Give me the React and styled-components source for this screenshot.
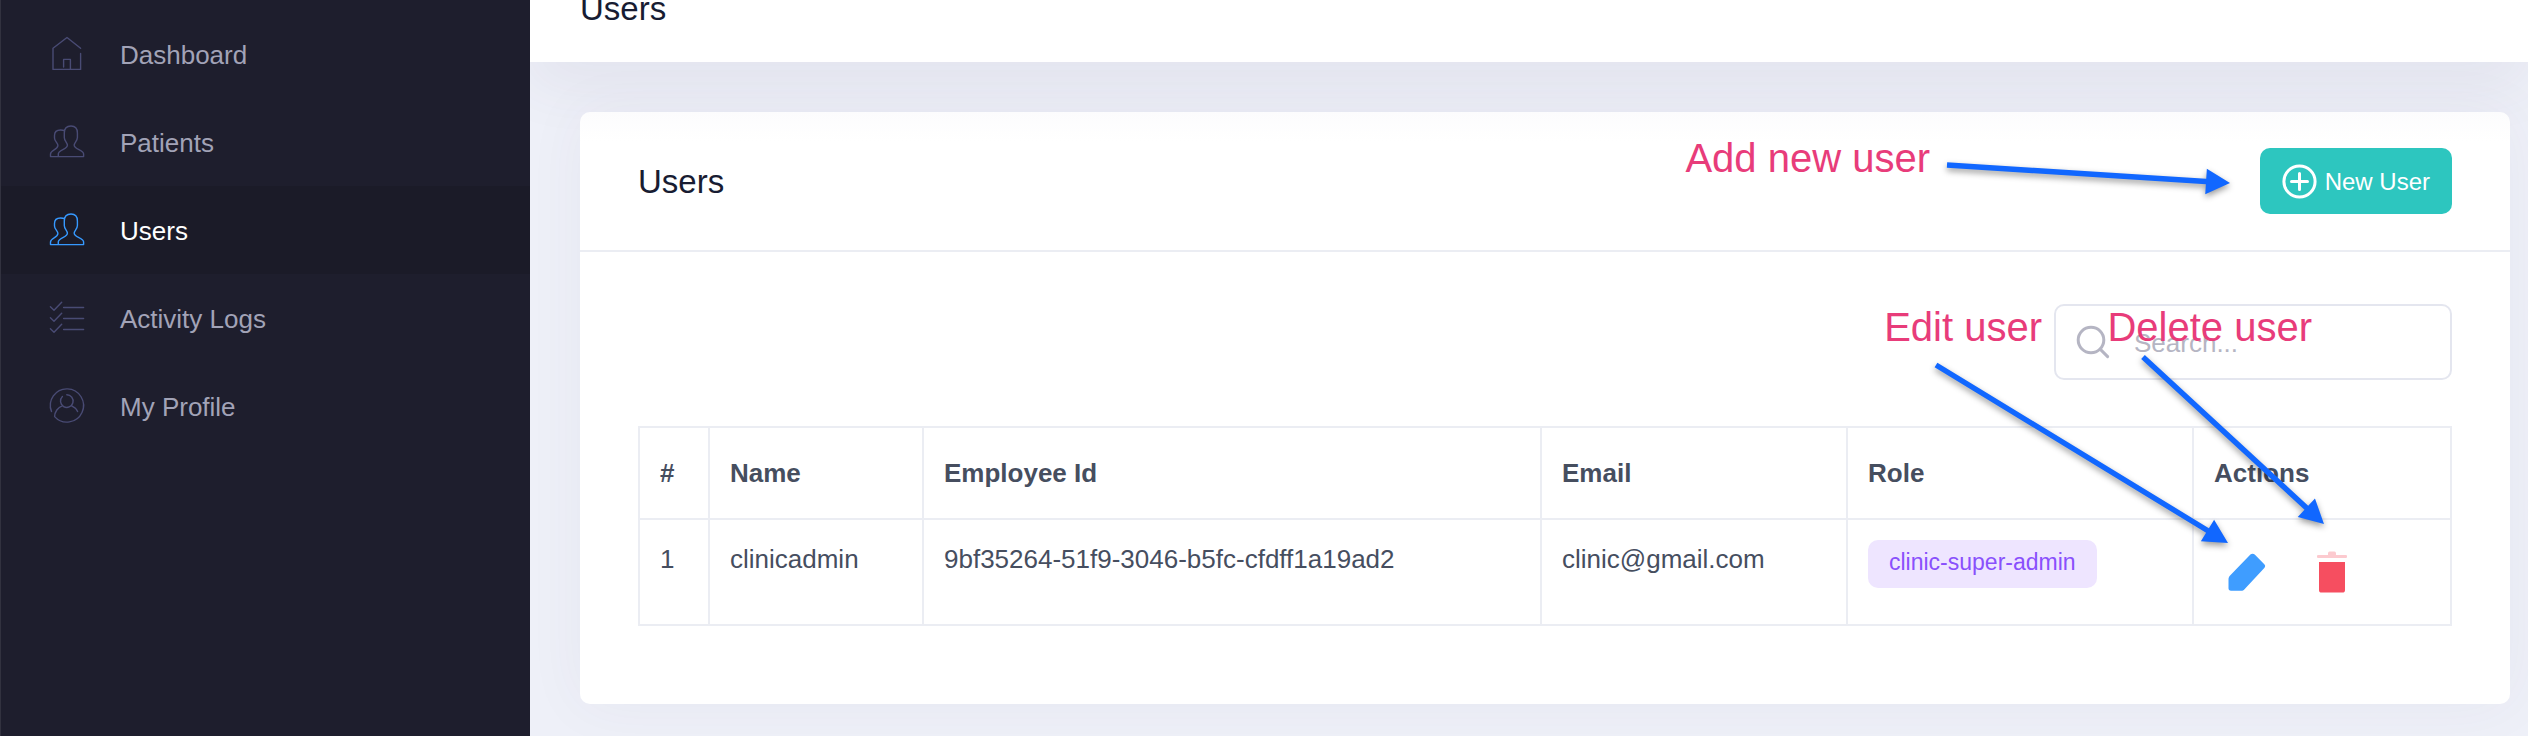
import React from "react";
import styled, { createGlobalStyle, css } from "styled-components";

const GlobalStyle = createGlobalStyle`
  *, *::before, *::after { box-sizing: border-box; }
  body {
    margin: 0;
    background: #eef0f8;
    color: #464e5f;
    font-family: "Liberation Sans", Arial, Helvetica, sans-serif;
    font-size: 26px;
    line-height: 39px;
  }
`;

const Page = styled.div`
  display: flex;
  min-height: 100vh;
`;

const Sidebar = styled.nav`
  flex: none;
  width: 530px;
  padding-top: 10px;
  background: #1e1e2d;
  border-left: 1px solid #32323f;
`;

const NavList = styled.ul`
  list-style: none;
  margin: 0;
  padding: 0;
`;

const NavLink = styled.a`
  display: flex;
  align-items: center;
  gap: 36px;
  height: 88px;
  padding-left: 49px;
  color: ${(p) => (p.$active ? "#ffffff" : "#a2a3b7")};
  background: ${(p) => (p.$active ? "#1b1b28" : "transparent")};
  text-decoration: none;

  svg {
    flex: none;
    stroke: ${(p) => (p.$active ? "#3699ff" : "#494b74")};
  }
`;

const NavLabel = styled.span`
  padding-top: 2px;
`;

const Main = styled.main`
  flex: 1;
  min-width: 0;
  display: flex;
  flex-direction: column;
  overflow: hidden;
`;

const TopBar = styled.header`
  padding: 0 50px 44px;
  background: #ffffff;
  box-shadow: 0 20px 60px rgba(82, 63, 105, 0.08);
`;

const titleText = css`
  margin: 0;
  font-size: 33px;
  font-weight: 400;
  color: #181c32;
`;

const PageTitle = styled.h1`
  ${titleText}
  line-height: 18px;
`;

const Content = styled.div`
  padding: 50px 18px 32px 50px;
`;

const Card = styled.section`
  position: relative;
  background: linear-gradient(#fcfcfd, #ffffff 30px);
  border-radius: 10px;
  box-shadow: 0 0 60px rgba(82, 63, 105, 0.05);
`;

const CardHeader = styled.div`
  display: flex;
  align-items: center;
  justify-content: space-between;
  height: 140px;
  padding: 0 58px;
  border-bottom: 2px solid #ebedf3;
`;

const CardTitle = styled.h2`
  ${titleText}
`;

const NewUserButton = styled.button`
  display: flex;
  align-items: center;
  gap: 8px;
  height: 66px;
  padding: 0 22px;
  border: 0;
  border-radius: 10px;
  background: #2dc6bf;
  color: #ffffff;
  font: inherit;
  font-size: 24px;
`;

const CardBody = styled.div`
  display: flex;
  flex-direction: column;
  gap: 46px;
  padding: 52px 58px 78px;
`;

const SearchBox = styled.label`
  display: flex;
  align-items: center;
  align-self: flex-end;
  gap: 24px;
  width: 398px;
  height: 76px;
  padding: 0 20px;
  border: 2px solid #e4e6ef;
  border-radius: 10px;
`;

const SearchInput = styled.input`
  flex: 1;
  min-width: 0;
  padding: 2px 0 0;
  border: 0;
  outline: 0;
  background: transparent;
  color: #464e5f;
  font: inherit;

  &::placeholder {
    color: #b5b5c3;
    opacity: 1;
  }
`;

const Table = styled.table`
  width: 100%;
  table-layout: fixed;
  border-collapse: collapse;
`;

const Col = styled.col`
  width: ${(p) => p.$width};
`;

const HeadCell = styled.th`
  height: 92px;
  padding: 0 20px;
  border: 2px solid #ebedf3;
  text-align: left;
  font-weight: 700;
`;

const Cell = styled.td`
  padding: 20px;
  border: 2px solid #ebedf3;
  vertical-align: top;
`;

const RoleBadge = styled.span`
  display: inline-flex;
  align-items: center;
  height: 48px;
  padding: 0 21px 4px;
  border-radius: 10px;
  background: #eee5ff;
  color: #8950fc;
  font-size: 23px;
  vertical-align: top;
`;

const Actions = styled.div`
  display: flex;
  gap: 19px;
`;

const IconButton = styled.button`
  display: flex;
  align-items: center;
  justify-content: center;
  width: 66px;
  height: 64px;
  padding: 0;
  border: 0;
  background: transparent;
`;

const Annotation = styled.span`
  position: absolute;
  top: ${(p) => p.$top}px;
  right: ${(p) => p.$right}px;
  color: #e83c7a;
  font-size: 40px;
  line-height: 40px;
  white-space: nowrap;
  pointer-events: none;
`;

const ArrowLayer = styled.svg`
  position: absolute;
  top: 0;
  right: 0;
  pointer-events: none;
  filter: drop-shadow(0 3px 3px rgba(0, 0, 0, 0.4));
`;

function LineIcon({ children }) {
  return (
    <svg width="34" height="34" viewBox="0 0 34 34" fill="none" strokeWidth="1.4" strokeLinecap="round" strokeLinejoin="round" overflow="visible" aria-hidden="true">
      {children}
    </svg>
  );
}

const HomeIcon = () => (
  <LineIcon>
    <path d="M30.6 11.3 17 .5 3 11.3V32.4H30.6V16.4M13.6 30V22.4H20.4V32.4" />
  </LineIcon>
);

const UsersIcon = () => (
  <LineIcon>
    <path d="M8.3 31.6V29C8.3 24.8 17.4 24.5 17.4 20.3C17.4 17.5 14.3 16 14.3 12.5V8C14.3 3 17 1 21 1S27.4 3 27.4 8V12.5C27.4 16 24.2 17.5 24.2 20.3C24.2 24.5 33.6 24.8 33.6 29V31.6H.5V29C.5 25.2 7.9 24.6 7.9 20.6C7.9 17.8 4.5 16.4 4.5 13V10.5C4.5 6.5 7 5 10.5 5C12 5 13.4 5.2 14.5 5.7" />
  </LineIcon>
);

const ListIcon = () => (
  <LineIcon>
    <path d="M.4 5.8 4 9.3 11.7 1.3M13.6 6.5H33.6M.4 16.8 4 20.3 11.7 12.3M13.6 17.5H33.6M.4 27.8 4 31.3 11.7 23.3M13.6 28.5H33.6" />
  </LineIcon>
);

const ProfileIcon = () => (
  <LineIcon>
    <path d="M1.5 22.6A16.6 16.6 0 1 1 4.6 27.6C4.6 23 8 18.2 12.2 16.8M21.6 16.8C24.4 18 26.6 20 27.6 22.6M16.8 5.8A6.3 6.3 0 1 1 12.4 7.6" />
  </LineIcon>
);

const NAV_ITEMS = [
  { label: "Dashboard", Icon: HomeIcon },
  { label: "Patients", Icon: UsersIcon },
  { label: "Users", Icon: UsersIcon, active: true },
  { label: "Activity Logs", Icon: ListIcon },
  { label: "My Profile", Icon: ProfileIcon },
];

const COLUMNS = [
  { label: "#", width: "70px" },
  { label: "Name", width: "214px" },
  { label: "Employee Id", width: "auto" },
  { label: "Email", width: "306px" },
  { label: "Role", width: "346px" },
  { label: "Actions", width: "258px" },
];

const USERS = [
  {
    name: "clinicadmin",
    employeeId: "9bf35264-51f9-3046-b5fc-cfdff1a19ad2",
    email: "clinic@gmail.com",
    role: "clinic-super-admin",
  },
];

const ANNOTATIONS = [
  { text: "Add new user", top: 26, right: 580 },
  { text: "Edit user", top: 195, right: 468 },
  { text: "Delete user", top: 195, right: 198 },
];

const ARROWS = [
  { from: [77, 53], to: [360, 71] },
  { from: [66, 253], to: [358, 431] },
  { from: [273, 245], to: [454, 412] },
];

function Arrow({ from, to }) {
  const dx = to[0] - from[0];
  const dy = to[1] - from[1];
  const length = Math.hypot(dx, dy);
  const angle = (Math.atan2(dy, dx) * 180) / Math.PI;
  return (
    <g transform={`translate(${from[0]} ${from[1]}) rotate(${angle})`}>
      <path d={`M0-2.7H${length - 24}V-12.7L${length} 0L${length - 24} 12.7V2.7H0Z`} />
    </g>
  );
}

export default function App() {
  return (
    <>
      <GlobalStyle />
      <Page>
        <Sidebar aria-label="Main">
          <NavList>
            {NAV_ITEMS.map(({ label, Icon, active }) => (
              <li key={label}>
                <NavLink href="#" $active={active} aria-current={active ? "page" : undefined}>
                  <Icon />
                  <NavLabel>{label}</NavLabel>
                </NavLink>
              </li>
            ))}
          </NavList>
        </Sidebar>
        <Main>
          <TopBar>
            <PageTitle>Users</PageTitle>
          </TopBar>
          <Content>
            <Card>
              <CardHeader>
                <CardTitle>Users</CardTitle>
                <NewUserButton type="button">
                  <svg width="35" height="35" viewBox="0 0 35 35" fill="none" stroke="#fff" strokeWidth="3" strokeLinecap="round" aria-hidden="true">
                    <circle cx="17.5" cy="17.5" r="15.6" />
                    <path d="M9.5 17.5H25.5M17.5 9.5V25.5" />
                  </svg>
                  New User
                </NewUserButton>
              </CardHeader>
              <CardBody>
                <SearchBox>
                  <svg width="34" height="34" viewBox="0 0 34 34" fill="none" stroke="#b5b5c3" strokeWidth="3" strokeLinecap="round" aria-hidden="true">
                    <circle cx="15" cy="15" r="12.8" />
                    <path d="M24.4 24.4 31.6 31.6" />
                  </svg>
                  <SearchInput type="text" placeholder="Search..." aria-label="Search users" />
                </SearchBox>
                <Table>
                  <colgroup>
                    {COLUMNS.map((c) => (
                      <Col key={c.label} $width={c.width} />
                    ))}
                  </colgroup>
                  <thead>
                    <tr>
                      {COLUMNS.map((c) => (
                        <HeadCell key={c.label} scope="col">{c.label}</HeadCell>
                      ))}
                    </tr>
                  </thead>
                  <tbody>
                    {USERS.map((u, i) => (
                      <tr key={u.employeeId}>
                        <Cell>{i + 1}</Cell>
                        <Cell>{u.name}</Cell>
                        <Cell>{u.employeeId}</Cell>
                        <Cell>{u.email}</Cell>
                        <Cell>
                          <RoleBadge>{u.role}</RoleBadge>
                        </Cell>
                        <Cell>
                          <Actions>
                            <IconButton type="button" aria-label="Edit user">
                              <svg width="38" height="40" viewBox="0 0 38 40" fill="#3f9dff" aria-hidden="true">
                                <path d="M.5 27.5C.5 25.9 1.1 24.6 2.1 23.6L22.4 2.6C23.7 1.3 25.4 1.3 26.7 2.6L36.3 12.2C37.5 13.4 37.4 14.7 36.3 15.9L16.5 37.2C15.5 38.3 14.6 38.7 13.2 38.7H3C1.4 38.7 .5 37.7 .5 36.2Z" />
                              </svg>
                            </IconButton>
                            <IconButton type="button" aria-label="Delete user">
                              <svg width="30" height="42" viewBox="0 0 30 42" fill="#f64e60" aria-hidden="true">
                                <path d="M2 11H28V39Q28 41.6 25.4 41.6H4.6Q2 41.6 2 39Z" />
                                <path opacity=".3" d="M1 4H11V2.2Q11 .6 12.6 .6H17.4Q19 .6 19 2.2V4H29Q30 4 30 5V6Q30 7 29 7H1Q0 7 0 6V5Q0 4 1 4Z" />
                              </svg>
                            </IconButton>
                          </Actions>
                        </Cell>
                      </tr>
                    ))}
                  </tbody>
                </Table>
              </CardBody>
              {ANNOTATIONS.map((a) => (
                <Annotation key={a.text} $top={a.top} $right={a.right}>{a.text}</Annotation>
              ))}
              <ArrowLayer width="640" height="480" viewBox="0 0 640 480" fill="#1167ff" aria-hidden="true">
                {ARROWS.map((a) => (
                  <Arrow key={a.to.join()} {...a} />
                ))}
              </ArrowLayer>
            </Card>
          </Content>
        </Main>
      </Page>
    </>
  );
}
